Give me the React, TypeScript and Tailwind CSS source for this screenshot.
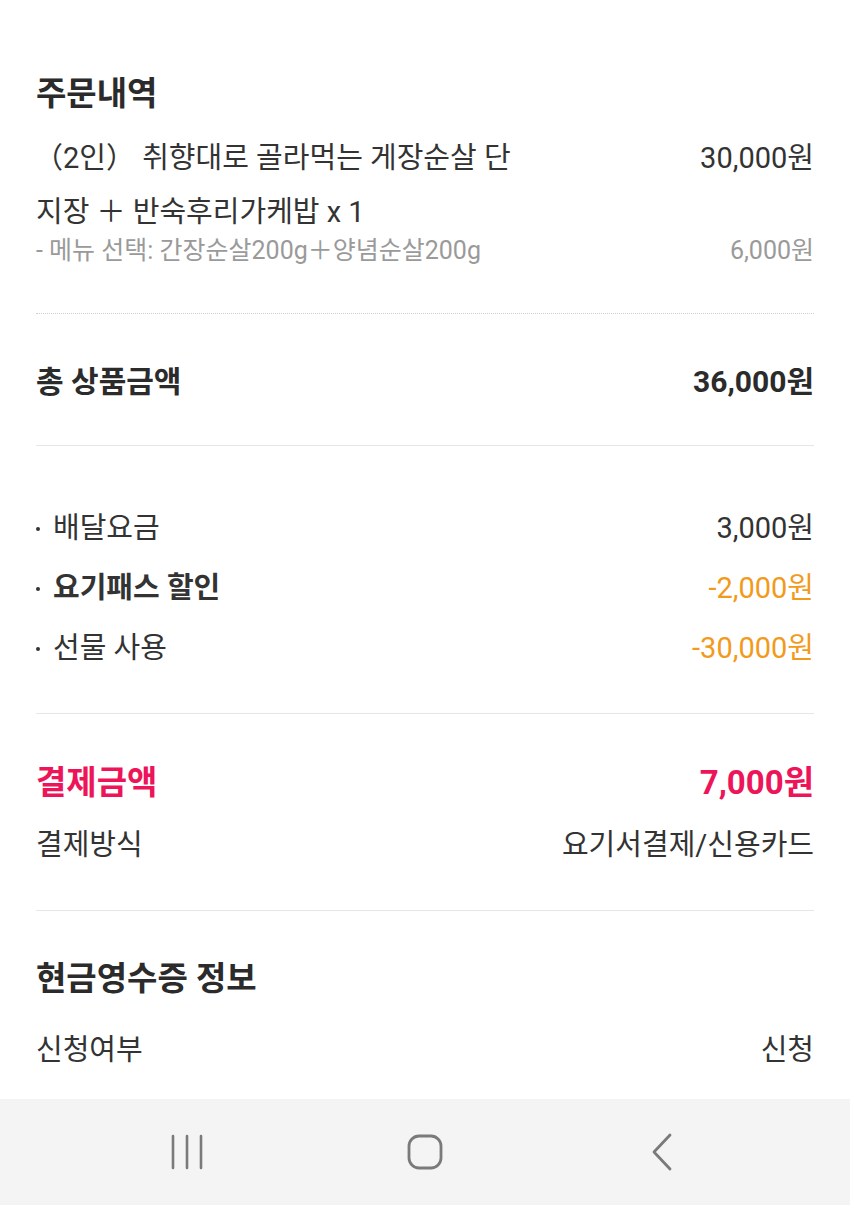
import React from "react";

const font = { fontFamily: 'Roboto, "Noto Sans CJK KR", sans-serif' };

interface RowProps {
  label: string;
  value: string;
  bullet?: boolean;
  bold?: boolean;
  valueClass?: string;
  className?: string;
}

const Row: React.FC<RowProps> = ({ label, value, bullet, bold, valueClass, className }) => {
  return (
    <div className={"flex h-[60px] items-center justify-between text-[29px] text-[#333333] " + (className || "")}>
      <div className="flex items-center">
        {bullet && <span className="mr-[13px] inline-block h-[4px] w-[4px] rounded-full bg-[#333333]" />}
        <span className={bold ? "font-bold" : ""}>{label}</span>
      </div>
      <span className={valueClass || ""}>{value}</span>
    </div>
  );
};

const Divider: React.FC<{ className?: string }> = ({ className }) => (
  <div className={"h-px bg-[#e6e6e6] " + (className || "")} />
);

export default function App() {
  return (
    <div className="flex h-[1205px] w-[850px] flex-col bg-white" style={font}>
      <div className="flex-1 px-[36px]">
        {/* 주문내역 */}
        <div className="mt-[64px] flex h-[60px] items-center text-[33px] font-bold text-[#2b2b2b]">
          주문내역
        </div>
        <div className="mt-[7px] flex items-start justify-between text-[29px] leading-[54px] text-[#333333]">
          <div>
            <span className="-ml-[2px]">（2인） 취향대로 골라먹는 게장순살 단</span>
            <br />
            지장 ＋ 반숙후리가케밥 x 1
          </div>
          <span>30,000원</span>
        </div>
        <div className="flex h-[24px] items-center justify-between text-[25px] text-[#9a9a9a]">
          <span>- 메뉴 선택: 간장순살200g＋양념순살200g</span>
          <span>6,000원</span>
        </div>
        <div className="mt-[50px] border-t border-dotted border-[#cfcfcf]" />

        {/* 총 상품금액 */}
        <div className="mt-[37px] flex h-[60px] items-center justify-between text-[30px] font-bold text-[#2b2b2b]">
          <span>총 상품금액</span>
          <span>36,000원</span>
        </div>
        <Divider className="mt-[34px]" />

        {/* 요금 내역 */}
        <div className="mt-[53px]">
          <Row bullet label="배달요금" value="3,000원" />
          <Row bullet bold label="요기패스 할인" value="-2,000원" valueClass="text-[#f29a1c]" />
          <Row bullet label="선물 사용" value="-30,000원" valueClass="text-[#f29a1c]" />
        </div>
        <Divider className="mt-[34px]" />

        {/* 결제금액 */}
        <div className="mt-[39px] flex h-[60px] items-center justify-between text-[33px] font-bold text-[#ed1459]">
          <span>결제금액</span>
          <span>7,000원</span>
        </div>
        <Row label="결제방식" value="요기서결제/신용카드" className="mt-[3px]" />
        <Divider className="mt-[34px]" />

        {/* 현금영수증 */}
        <div className="mt-[38px] flex h-[60px] items-center text-[33px] font-bold text-[#2b2b2b]">
          현금영수증 정보
        </div>
        <Row label="신청여부" value="신청" className="mt-[12px]" />
      </div>

      {/* 하단 내비게이션 */}
      <div className="flex h-[106px] items-center justify-around bg-[#f4f4f4] px-[70px]">
        <div className="flex w-[200px] justify-center">
          <svg width="36" height="36" viewBox="0 0 36 36" fill="none" stroke="#7a7a7a" strokeWidth="2.6" strokeLinecap="round">
            <path d="M3 2v32M17 2v32M31 2v32" />
          </svg>
        </div>
        <div className="flex w-[200px] justify-center">
          <svg width="36" height="36" viewBox="0 0 36 36" fill="none" stroke="#7a7a7a" strokeWidth="2.8">
            <rect x="2" y="2" width="32" height="32" rx="10" />
          </svg>
        </div>
        <div className="flex w-[200px] justify-center">
          <svg width="24" height="38" viewBox="0 0 24 38" fill="none" stroke="#7a7a7a" strokeWidth="2.8" strokeLinecap="round" strokeLinejoin="round">
            <path d="M20 2L4 19l16 17" />
          </svg>
        </div>
      </div>
    </div>
  );
}
